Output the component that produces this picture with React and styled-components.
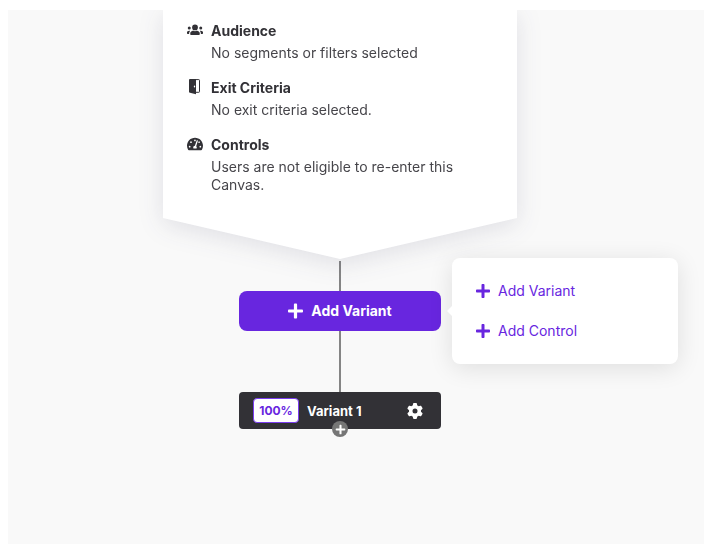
import React from "react";
import styled, { createGlobalStyle } from "styled-components";
import { FaPlus, FaTachometerAlt } from "react-icons/fa";
import { FaGear } from "react-icons/fa6";

const GlobalStyle = createGlobalStyle`
  * {
    box-sizing: border-box;
  }

  body {
    margin: 0;
    background: #fff;
    color: #323136;
    font-family: Inter, "Liberation Sans", sans-serif;
    font-size: 14px;
    line-height: 18px;
  }

  button {
    font: inherit;
    border: 0;
    cursor: pointer;
  }
`;

const Board = styled.main`
  display: flex;
  flex-direction: column;
  align-items: center;
  min-height: calc(100vh - 12px);
  margin: 10px 4px 2px 8px;
  padding-right: 32px;
  background: #f9f9f9;
  overflow: hidden;
`;

const EntryShadow = styled.div`
  width: 100%;
  max-width: 354px;
  filter: drop-shadow(0 5px 12px rgba(40, 44, 80, 0.12));
`;

const EntryCard = styled.section`
  display: flex;
  flex-direction: column;
  gap: 17px;
  padding: 12px 24px 65px;
  background: #fff;
  clip-path: polygon(0 0, 100% 0, 100% calc(100% - 41px), 50% 100%, 0 calc(100% - 41px));
`;

const Rule = styled.div`
  display: flex;
  gap: 8px;

  > svg {
    flex: none;
    width: 16px;
    height: 16px;
  }
`;

const RuleTitle = styled.h2`
  margin: 0 0 4px;
  font-size: 14px;
  line-height: 18px;
  font-weight: 700;
`;

const RuleText = styled.p`
  margin: 0;
  color: #46454a;
`;

const Connector = styled.div`
  width: 2px;
  height: ${({ $length }) => $length}px;
  margin-top: ${({ $gap }) => $gap || 0}px;
  background: #858585;
`;

const VariantStep = styled.div`
  position: relative;
  width: 202px;
`;

const AddButton = styled.button`
  display: flex;
  align-items: center;
  justify-content: center;
  gap: 8px;
  width: 100%;
  height: 40px;
  border-radius: 8px;
  background: #6826df;
  color: #fff;
  font-weight: 700;

  svg {
    width: 15px;
    height: 18px;
  }
`;

const Menu = styled.div`
  position: absolute;
  top: 50%;
  left: calc(100% + 11px);
  transform: translateY(-50%);
  display: flex;
  flex-direction: column;
  align-items: flex-start;
  gap: 16px;
  width: 226px;
  padding: 21px 24px;
  border-radius: 8px;
  background: #fff;
  box-shadow: 0 4px 24px rgba(0, 0, 0, 0.11);

  &::before {
    content: "";
    position: absolute;
    top: 50%;
    right: 100%;
    transform: translateY(-50%);
    border: 5px solid transparent;
    border-left: 0;
    border-right-color: #fff;
  }
`;

const MenuItem = styled.button`
  display: flex;
  align-items: center;
  gap: 8px;
  height: 24px;
  padding: 0;
  background: none;
  color: #6826df;

  svg {
    width: 14px;
    height: 18px;
  }
`;

const VariantNode = styled.div`
  position: relative;
  display: flex;
  align-items: center;
  gap: 8px;
  width: 202px;
  height: 37px;
  padding: 0 18px 0 14px;
  border-radius: 4px;
  background: #323136;
  color: #fff;
  font-size: 13px;
  font-weight: 700;
`;

const Share = styled.span`
  display: grid;
  place-items: center;
  width: 46px;
  height: 25px;
  border: 1px solid #7a3cf0;
  border-radius: 4px;
  background: #fff;
  color: #6826df;
  font-size: 12px;
`;

const SettingsButton = styled.button`
  display: flex;
  margin-left: auto;
  padding: 0;
  background: none;
  color: #fff;

  svg {
    width: 16px;
    height: 16px;
  }
`;

const AddStepButton = styled.button`
  position: absolute;
  left: 50%;
  bottom: 0;
  transform: translate(-50%, 50%);
  display: grid;
  place-items: center;
  width: 16px;
  height: 16px;
  padding: 0;
  border-radius: 50%;
  background: #767676;
  color: #fff;

  svg {
    width: 11px;
    height: 11px;
  }
`;

const UsersIcon = () => (
  <svg viewBox="0 0 640 512" fill="currentColor" aria-hidden="true">
    <circle cx="320" cy="152" r="115" />
    <circle cx="550" cy="180" r="60" />
    <circle cx="90" cy="180" r="60" />
    <path d="M440 300c-30-12-52-14-60-14-36 24-84 24-120 0-8 0-30 2-60 14-42 17-70 50-70 88v40c0 16 12 28 28 28h324c16 0 28-12 28-28v-40c0-38-28-71-70-88z" />
    <path d="M84 412c0-50 14-82 44-112-12-12-22-16-40-16-52 0-88 30-88 72v32c0 14 10 24 24 24z" />
    <path d="M556 412c0-50-14-82-44-112 12-12 22-16 40-16 52 0 88 30 88 72v32c0 14-10 24-24 24z" />
  </svg>
);

const DoorIcon = () => (
  <svg viewBox="0 0 16 16" fill="currentColor" aria-hidden="true">
    <path
      fillRule="evenodd"
      d="M3 0h6v15.2L3 13.8a1 1 0 0 1-1-1V1a1 1 0 0 1 1-1zM7.5 6.6a.7 1 0 1 0 0 2 .7 1 0 1 0 0-2z"
    />
    <path
      d="M9 .6h2.8a.7.7 0 0 1 .7.7v11.3a.7.7 0 0 1-.7.7H9"
      fill="none"
      stroke="currentColor"
      strokeWidth="1"
    />
  </svg>
);

const rules = [
  {
    icon: <UsersIcon />,
    title: "Audience",
    text: "No segments or filters selected",
  },
  {
    icon: <DoorIcon />,
    title: "Exit Criteria",
    text: "No exit criteria selected.",
  },
  {
    icon: <FaTachometerAlt />,
    title: "Controls",
    text: "Users are not eligible to re-enter this Canvas.",
  },
];

const App = () => {
  return (
    <>
      <GlobalStyle />
      <Board>
        <EntryShadow>
          <EntryCard>
            {rules.map(({ icon, title, text }) => (
              <Rule key={title}>
                {icon}
                <div>
                  <RuleTitle>{title}</RuleTitle>
                  <RuleText>{text}</RuleText>
                </div>
              </Rule>
            ))}
          </EntryCard>
        </EntryShadow>

        <Connector $length={30} $gap={2} />
        <VariantStep>
          <AddButton type="button">
            <FaPlus />
            Add Variant
          </AddButton>
          <Menu>
            <MenuItem type="button">
              <FaPlus />
              Add Variant
            </MenuItem>
            <MenuItem type="button">
              <FaPlus />
              Add Control
            </MenuItem>
          </Menu>
        </VariantStep>

        <Connector $length={61} />
        <VariantNode>
          <Share>100%</Share>
          Variant 1
          <SettingsButton type="button" aria-label="Variant settings">
            <FaGear />
          </SettingsButton>
          <AddStepButton type="button" aria-label="Add step">
            <FaPlus />
          </AddStepButton>
        </VariantNode>
      </Board>
    </>
  );
};

export default App;
